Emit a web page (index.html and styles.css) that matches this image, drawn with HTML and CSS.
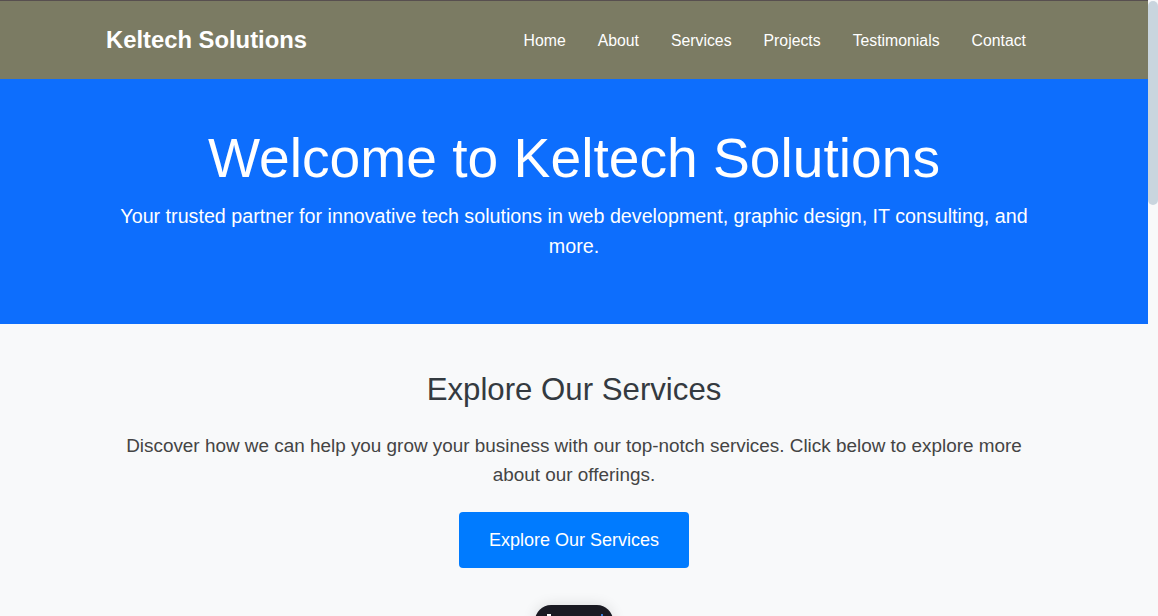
FILE: index.html
```html
<!DOCTYPE html>
<html lang="en">
<head>
<meta charset="utf-8">
<title>Keltech Solutions</title>
<link rel="stylesheet" href="styles.css">
</head>
<body>
<nav class="navbar">
  <div class="container nav-inner">
    <a class="brand" href="#">Keltech Solutions</a>
    <ul class="nav-links">
      <li><a href="#">Home</a></li>
      <li><a href="#">About</a></li>
      <li><a href="#">Services</a></li>
      <li><a href="#">Projects</a></li>
      <li><a href="#">Testimonials</a></li>
      <li><a href="#">Contact</a></li>
    </ul>
  </div>
</nav>
<header class="hero">
  <div class="container">
    <h1 class="hero-title">Welcome to Keltech Solutions</h1>
    <p class="hero-lead">Your trusted partner for innovative tech solutions in web development, graphic design, IT consulting, and more.</p>
  </div>
</header>
<section class="services">
  <div class="container">
    <h2 class="section-title">Explore Our Services</h2>
    <p class="section-text">Discover how we can help you grow your business with our top-notch services. Click below to explore more about our offerings.</p>
    <a class="btn-primary" href="#">Explore Our Services</a>
    <div class="widget">
      <span class="widget-dot white"></span>
      <span class="widget-dot blue"></span>
    </div>
  </div>
</section>
<div class="scrollbar"><div class="scrollbar-thumb"></div></div>
</body>
</html>
```
FILE: styles.css
```css
html { overflow: hidden; }

* { box-sizing: border-box; }
body {
  margin: 0;
  padding-right: 10px;
  font-family: "Liberation Sans", Arial, sans-serif;
  background: #f8f9fa;
  color: #212529;
}
.container {
  width: 960px;
  margin: 0 auto;
  padding: 0 12px;
}
.navbar {
  background: #7b7b63;
  border-top: 1px solid #574f4f;
  height: 79px;
  display: flex;
  align-items: center;
}
.nav-inner {
  display: flex;
  align-items: center;
  justify-content: space-between;
}
.brand {
  color: #fff;
  font-weight: bold;
  font-size: 23.8px;
  text-decoration: none;
}
.nav-links {
  list-style: none;
  margin: 0;
  padding: 2px 0 0;
  display: flex;
}
.nav-links a {
  display: block;
  color: #fff;
  text-decoration: none;
  font-size: 15.8px;
  padding: 8px 16px;
}
.hero {
  background: #0d6efd;
  color: #fff;
  text-align: center;
  padding: 46px 0 63px;
}
.hero-title {
  margin: 0 0 9px;
  font-size: 55.2px;
  font-weight: normal;
  line-height: 67px;
}
.hero-lead {
  margin: 0;
  font-size: 19.7px;
  line-height: 30px;
}
.services {
  text-align: center;
  padding-top: 47px;
  min-height: 1400px;
}
.section-title {
  margin: 0 0 22px;
  font-size: 31.2px;
  font-weight: normal;
  line-height: 38px;
  color: #343a40;
}
.section-text {
  margin: 0 auto 23px;
  font-size: 18.9px;
  line-height: 29px;
  color: #444;
}
.btn-primary {
  display: inline-block;
  background: #007bff;
  color: #fff;
  text-decoration: none;
  font-size: 18px;
  padding: 0 30px;
  height: 56px;
  line-height: 56px;
  border-radius: 4px;
}
.widget {
  margin: 37px auto 0;
  width: 78px;
  height: 60px;
  background: #1a1a22;
  border-radius: 16px;
  box-shadow: 0 0 14px rgba(0,0,0,0.12);
  position: relative;
}
.widget-dot {
  position: absolute;
  top: 9px;
  width: 4px;
  height: 6px;
}
.widget-dot.white { left: 12px; background: #fff; }
.widget-dot.blue { left: 66px; background: #3a7bd5; width: 2px; }
.scrollbar {
  position: fixed;
  top: 0;
  right: 0;
  width: 10px;
  height: 100%;
  background: #f8f9fa;
}
.scrollbar-thumb {
  margin-top: 1px;
  height: 204px;
  background: #c9d5de;
  border-radius: 5px;
}
```
